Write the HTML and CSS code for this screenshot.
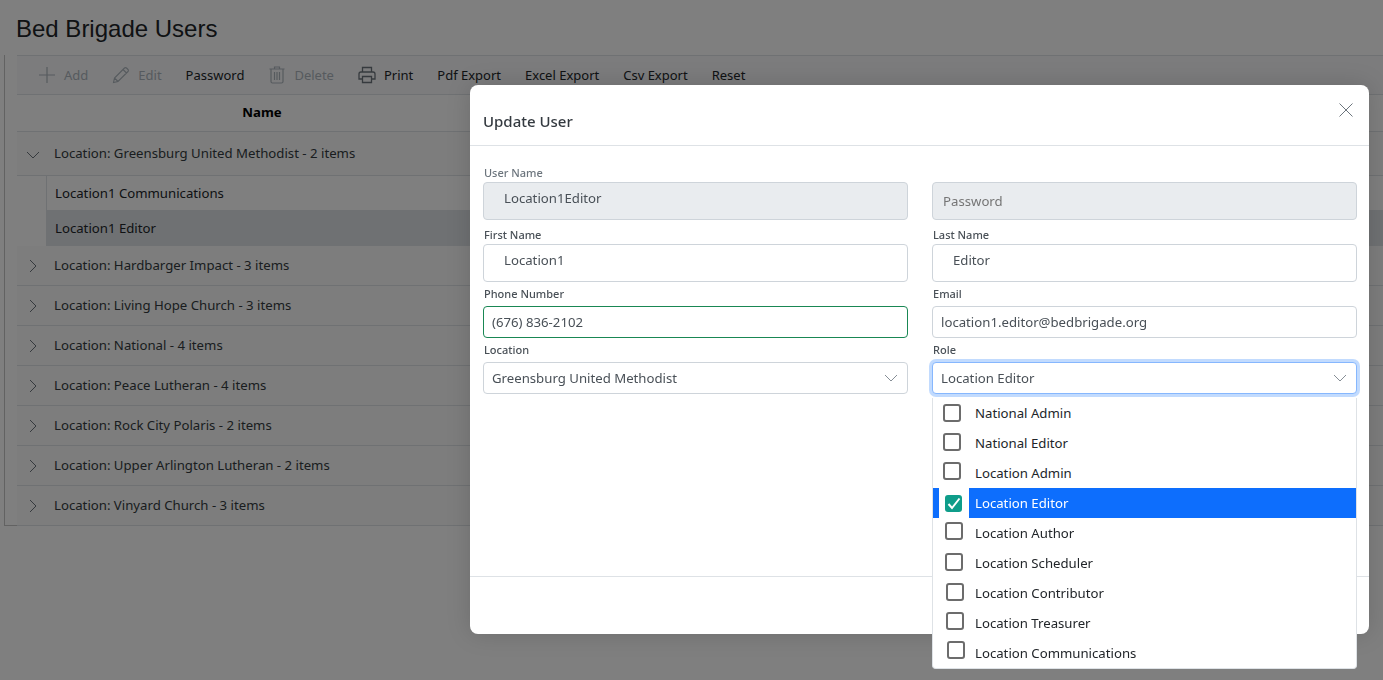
FILE: index.html
```html
<!DOCTYPE html>
<html lang="en">
<head>
  <meta charset="UTF-8" />
  <meta name="viewport" content="width=device-width, initial-scale=1.0"/>
  <title>Bed Brigade Users</title>
  <link rel="stylesheet" href="styles.css">
</head>
<body>

  <h1 class="page-title">Bed Brigade Users</h1>

  <section class="grid">
    <div class="toolbar">
      <span class="tool disabled">
        <svg width="18" height="18" viewBox="0 0 18 18"><path d="M9 1v16M1 9h16" fill="none" stroke="currentColor" stroke-width="1.2"/></svg>
        Add
      </span>
      <span class="tool disabled">
        <svg width="18" height="18" viewBox="0 0 18 18"><path d="M1.500 16.500l1-4.500L12.500 2a1.400 1.400 0 0 1 2 0l1.500 1.500a1.400 1.400 0 0 1 0 2L6 15.500zM2.500 12l3.500 3.500M11 3.500l3.500 3.500" fill="none" stroke="currentColor" stroke-width="1.100"/></svg>
        Edit
      </span>
      <span class="tool">Password</span>
      <span class="tool disabled">
        <svg width="18" height="18" viewBox="0 0 18 18"><path d="M1.500 3h15M6.500 3V1h5v2M3 3v12.500a1.500 1.500 0 0 0 1.500 1.500h9a1.500 1.500 0 0 0 1.500-1.500V3M6.500 6v8M9 6v8M11.500 6v8" fill="none" stroke="currentColor" stroke-width="1.200"/></svg>
        Delete
      </span>
      <span class="tool">
        <svg width="18" height="18" viewBox="0 0 18 18"><path d="M4.500 6V1.500h9V6M4.500 13H1V8a2 2 0 0 1 2-2h12a2 2 0 0 1 2 2v5h-3.500M4.500 10.500h9v6h-9z" fill="none" stroke="currentColor" stroke-width="1.300"/></svg>
        Print
      </span>
      <span class="tool">Pdf Export</span>
      <span class="tool">Excel Export</span>
      <span class="tool">Csv Export</span>
      <span class="tool">Reset</span>
    </div>

    <div class="grid-head"><span class="col-name">Name</span></div>

    <div class="group open">
      <svg class="chev" width="14" height="14" viewBox="0 0 14 14"><path d="M1 4l6 6 6-6" fill="none" stroke="currentColor"/></svg>
      Location: Greensburg United Methodist - 2 items
    </div>
    <div class="sub-row">Location1 Communications</div>
    <div class="sub-row selected">Location1 Editor</div>

    <div class="group">
      <svg class="chev" width="14" height="14" viewBox="0 0 14 14"><path d="M4 1l6 6-6 6" fill="none" stroke="currentColor"/></svg>
      Location: Hardbarger Impact - 3 items
    </div>
    <div class="group">
      <svg class="chev" width="14" height="14" viewBox="0 0 14 14"><path d="M4 1l6 6-6 6" fill="none" stroke="currentColor"/></svg>
      Location: Living Hope Church - 3 items
    </div>
    <div class="group">
      <svg class="chev" width="14" height="14" viewBox="0 0 14 14"><path d="M4 1l6 6-6 6" fill="none" stroke="currentColor"/></svg>
      Location: National - 4 items
    </div>
    <div class="group">
      <svg class="chev" width="14" height="14" viewBox="0 0 14 14"><path d="M4 1l6 6-6 6" fill="none" stroke="currentColor"/></svg>
      Location: Peace Lutheran - 4 items
    </div>
    <div class="group">
      <svg class="chev" width="14" height="14" viewBox="0 0 14 14"><path d="M4 1l6 6-6 6" fill="none" stroke="currentColor"/></svg>
      Location: Rock City Polaris - 2 items
    </div>
    <div class="group">
      <svg class="chev" width="14" height="14" viewBox="0 0 14 14"><path d="M4 1l6 6-6 6" fill="none" stroke="currentColor"/></svg>
      Location: Upper Arlington Lutheran - 2 items
    </div>
    <div class="group">
      <svg class="chev" width="14" height="14" viewBox="0 0 14 14"><path d="M4 1l6 6-6 6" fill="none" stroke="currentColor"/></svg>
      Location: Vinyard Church - 3 items
    </div>
  </section>

  <div class="backdrop"></div>

  <div class="modal">
    <header class="modal-head">
      <h2>Update User</h2>
      <svg class="close" width="14" height="14" viewBox="0 0 14 14"><path d="M.5.5l13 13M13.500.5l-13 13" fill="none" stroke="currentColor"/></svg>
    </header>

    <form class="modal-body">
      <div class="field first">
        <label class="muted">User Name</label>
        <input class="control tall" type="text" value="Location1Editor" disabled>
      </div>
      <div class="field first">
        <label>&nbsp;</label>
        <input class="control tall plain" type="text" placeholder="Password" disabled>
      </div>
      <div class="field">
        <label>First Name</label>
        <input class="control tall" type="text" value="Location1">
      </div>
      <div class="field">
        <label>Last Name</label>
        <input class="control tall" type="text" value="Editor">
      </div>
      <div class="field">
        <label>Phone Number</label>
        <input class="control valid" type="text" value="(676) 836-2102">
      </div>
      <div class="field">
        <label>Email</label>
        <input class="control" type="text" value="location1.editor@bedbrigade.org">
      </div>
      <div class="field">
        <label>Location</label>
        <div class="control select">
          Greensburg United Methodist
          <svg width="14" height="8" viewBox="0 0 14 8"><path d="M1 1l6 6 6-6" fill="none" stroke="currentColor"/></svg>
        </div>
      </div>
      <div class="field">
        <label>Role</label>
        <div class="control select focused">
          Location Editor
          <svg width="14" height="8" viewBox="0 0 14 8"><path d="M1 1l6 6 6-6" fill="none" stroke="currentColor"/></svg>
        </div>
      </div>
    </form>

    <footer class="modal-foot"></footer>
  </div>

  <ul class="role-list">
    <li><span class="check"></span><span class="role-text">National Admin</span></li>
    <li><span class="check"></span><span class="role-text">National Editor</span></li>
    <li><span class="check"></span><span class="role-text">Location Admin</span></li>
    <li class="active">
      <span class="check on"><svg width="14" height="13" viewBox="0 0 14 13"><path d="M1.500 7l3.500 4 7.500-9.500" fill="none" stroke="#fff" stroke-width="2"/></svg></span>
      <span class="role-text">Location Editor</span>
    </li>
    <li><span class="check"></span><span class="role-text">Location Author</span></li>
    <li><span class="check"></span><span class="role-text">Location Scheduler</span></li>
    <li><span class="check"></span><span class="role-text">Location Contributor</span></li>
    <li><span class="check"></span><span class="role-text">Location Treasurer</span></li>
    <li><span class="check"></span><span class="role-text">Location Communications</span></li>
  </ul>

</body>
</html>
```

FILE: styles.css
```css
* {
  box-sizing: border-box;
}

html, body {
  height: 100%;
}

body {
  margin: 0;
  overflow: hidden;
  background-color: #fff;
  color: #212529;
  font-family: "Noto Sans", "Open Sans", sans-serif;
  font-size: 13.2px;
}

.page-title {
  margin: 0;
  padding: 15px 16px 0;
  height: 55px;
  font-family: "Liberation Sans", Arial, sans-serif;
  font-size: 24px;
  font-weight: 400;
  line-height: 28px;
}

.grid {
  margin-left: 4px;
  padding-left: 12px;
  height: 471px;
  background-color: #fff;
  border-left: 1px solid #c4c4c4;
  border-bottom: 1px solid #c4c4c4;
}

.toolbar {
  display: flex;
  align-items: center;
  gap: 24px;
  height: 40px;
  padding-left: 21px;
  font-size: 13px;
  border-top: 1px solid #dee2e6;
  border-bottom: 1px solid #dee2e6;
  background-color: #f8f9fa;
}

.tool {
  display: flex;
  align-items: center;
  gap: 8px;
}

.tool.disabled {
  color: #adb5bd;
}

.tool svg {
  color: #6c757d;
}

.tool.disabled svg {
  color: #adb5bd;
}

.grid-head {
  height: 37px;
  border-bottom: 1px solid #dee2e6;
  background-color: #fff;
}

.col-name {
  display: block;
  width: 490px;
  text-align: center;
  line-height: 34px;
  font-weight: 700;
  color: #000;
}

.group {
  display: flex;
  align-items: center;
  gap: 14px;
  height: 40px;
  padding-left: 9px;
  padding-bottom: 2px;
  background-color: #fafafa;
  border-bottom: 1px solid #dee2e6;
  color: #343a40;
}

.group.open {
  height: 44px;
}

.chev {
  color: #6c757d;
  flex: none;
  margin-top: 2px;
}

.open .chev {
  margin-top: 4px;
}

.sub-row {
  height: 35px;
  margin-left: 29px;
  padding-left: 8px;
  line-height: 34px;
  background-color: #fff;
  border-left: 1px solid #dee2e6;
  border-bottom: 1px solid #dee2e6;
}

.sub-row.selected {
  background-color: #dee2e6;
}

.backdrop {
  position: fixed;
  inset: 0;
  background-color: rgba(0, 0, 0, 0.5);
}

.modal {
  position: absolute;
  top: 85px;
  left: 470px;
  width: 899px;
  height: 549px;
  display: flex;
  flex-direction: column;
  background-color: #fff;
  border-radius: 8px;
  box-shadow: 0 0 24px rgba(0, 0, 0, 0.15);
}

.modal-head {
  height: 61px;
  padding: 0 16px 0 13px;
  display: flex;
  align-items: center;
  justify-content: space-between;
  border-bottom: 1px solid #dee2e6;
}

.modal-head h2 {
  margin: 12px 0 0;
  font-size: 15px;
  font-weight: 500;
  color: #343a40;
}

.close {
  color: #6c757d;
  margin-bottom: 10px;
}

.modal-body {
  flex: 1;
  display: grid;
  grid-template-columns: 425px 425px;
  grid-auto-rows: min-content;
  column-gap: 24px;
  row-gap: 3px;
  padding: 18px 12px 0 13px;
}

.field.first {
  margin-bottom: 3px;
}

.field label {
  display: block;
  height: 18px;
  font-size: 11px;
  line-height: 18px;
  padding-left: 1px;
  font-weight: 500;
  color: #495057;
}

.field label.muted {
  color: #6c757d;
}

.field:not(.first):not(:has(.tall)) label {
  margin-bottom: 3px;
}

.control {
  display: block;
  width: 100%;
  height: 32px;
  padding: 0 8px;
  font: inherit;
  color: #495057;
  background-color: #fff;
  border: 1px solid #ced4da;
  border-radius: 4px;
  outline: none;
}

.control.tall {
  height: 38px;
  padding: 0 20px 6px;
}

.control.plain {
  padding: 0 10px;
}

.control:disabled {
  background-color: #e9ecef;
}

.control.valid {
  border-color: #198754;
}

.select {
  display: flex;
  align-items: center;
  justify-content: space-between;
}

.select svg {
  margin-right: 1px;
  color: #868e96;
}

.select.focused {
  border-color: #86b7fe;
  box-shadow: 0 0 0 3px rgba(13, 110, 253, 0.25);
}

.modal-foot {
  height: 58px;
  border-top: 1px solid #dee2e6;
}

.role-list {
  position: absolute;
  top: 398px;
  left: 932px;
  width: 425px;
  height: 271px;
  margin: 0;
  padding: 0;
  list-style: none;
  background-color: #fff;
  border: 1px solid #dee2e6;
  border-top: none;
  border-radius: 0 0 4px 4px;
}

.role-list li {
  display: flex;
  height: 30px;
}

.role-list li.active {
  border-left: 6px solid #0d6efd;
}

.role-text {
  flex: 1;
  padding-left: 6px;
  line-height: 30px;
}

.active .role-text {
  background-color: #0d6efd;
  color: #fff;
}

.check {
  flex: none;
  width: 18px;
  height: 18px;
  margin-right: 8px;
  margin-top: 5px;
  margin-left: 10px;
  border: 2px solid #6c6c6c;
  border-radius: 3px;
}

.role-list li:nth-child(1) .check { margin-top: 6px; }
.role-list li:nth-child(3) .check { margin-top: 4px; }

.role-list li:nth-child(5) .check,
.role-list li:nth-child(6) .check {
  margin-left: 12px;
  margin-right: 6px;
}

.role-list li:nth-child(5) .check { margin-top: 4px; }

.role-list li:nth-child(7) .check,
.role-list li:nth-child(8) .check {
  margin-left: 13px;
  margin-right: 5px;
}

.role-list li:nth-child(8) .check { margin-top: 4px; }

.role-list li:nth-child(9) .check {
  margin-left: 14px;
  margin-right: 4px;
  margin-top: 3px;
}

.check.on {
  width: 17px;
  height: 17px;
  margin: 7px 7px 0 6px;
  padding: 0;
  border: none;
  background-color: #0f9d8a;
  display: flex;
  align-items: center;
  justify-content: center;
}
```
